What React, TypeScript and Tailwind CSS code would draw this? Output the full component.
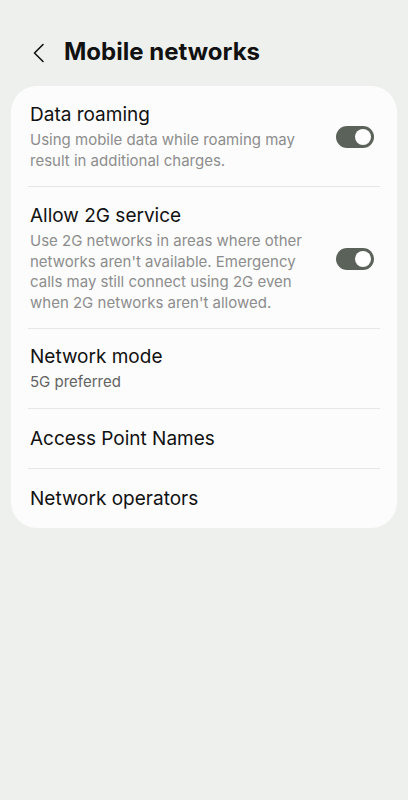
import React from "react";

type Row = {
  title: string;
  desc?: string;
  sub?: string;
  toggle?: boolean;
};

const rows: Row[] = [
  {
    title: "Data roaming",
    desc: "Using mobile data while roaming may result in additional charges.",
    toggle: true,
  },
  {
    title: "Allow 2G service",
    desc: "Use 2G networks in areas where other networks aren't available. Emergency calls may still connect using 2G even when 2G networks aren't allowed.",
    toggle: true,
  },
  { title: "Network mode", sub: "5G preferred" },
  { title: "Access Point Names" },
  { title: "Network operators" },
];

const Toggle = () => (
  <div className="ml-[24px] flex h-[22px] w-[38px] shrink-0 items-center justify-end rounded-full bg-[#5b6259] pr-[3px]">
    <div className="h-[16px] w-[16px] rounded-full bg-white" />
  </div>
);

const SettingRow = ({ row }: { row: Row }) => {
  if (!row.desc && !row.sub) {
    return (
      <div className="flex h-[59px] items-center px-[19px]">
        <p className="text-[19px] leading-[24px] text-[#111]">{row.title}</p>
      </div>
    );
  }
  if (row.sub) {
    return (
      <div className="pt-[16px] pb-[16px] pl-[19px] pr-[23px]">
        <p className="text-[19px] leading-[24px] text-[#111]">{row.title}</p>
        <p className="mt-[2.5px] text-[15px] leading-[20.5px] text-[#636363]">
          {row.sub}
        </p>
      </div>
    );
  }
  return (
    <div className="flex items-center pt-[17px] pb-[15px] pl-[19px] pr-[23px]">
      <div className="min-w-0 flex-1">
        <p className="text-[19px] leading-[24px] text-[#111]">{row.title}</p>
        <p className="mt-[3px] text-[15px] leading-[20.5px] text-[#8d8d8d]">
          {row.desc}
        </p>
      </div>
      {row.toggle && <Toggle />}
    </div>
  );
};

export default function App() {
  return (
    <div
      className="min-h-[800px] w-full bg-[#eef0ed] px-[11px]"
      style={{ fontFamily: "Inter, Roboto, 'Noto Sans', sans-serif" }}
    >
      <div className="flex h-[86px] items-start pt-[38px]">
        <svg
          width="14"
          height="28"
          viewBox="0 0 14 28"
          className="ml-[20px]"
          fill="none"
        >
          <path
            d="M12 6.5 L3.5 15 L12 23.5"
            stroke="#111"
            strokeWidth="1.6"
            strokeLinecap="round"
            strokeLinejoin="round"
          />
        </svg>
        <h1 className="ml-[19px] text-[24px] font-bold leading-[28px] text-[#111]">
          Mobile networks
        </h1>
      </div>

      <div className="flex flex-col rounded-[26px] bg-[#fcfcfc]">
        {rows.map((row, i) => (
          <div key={row.title}>
            {i > 0 && <div className="mx-[17px] h-px bg-[#e6e7e5]" />}
            <SettingRow row={row} />
          </div>
        ))}
      </div>
    </div>
  );
}
